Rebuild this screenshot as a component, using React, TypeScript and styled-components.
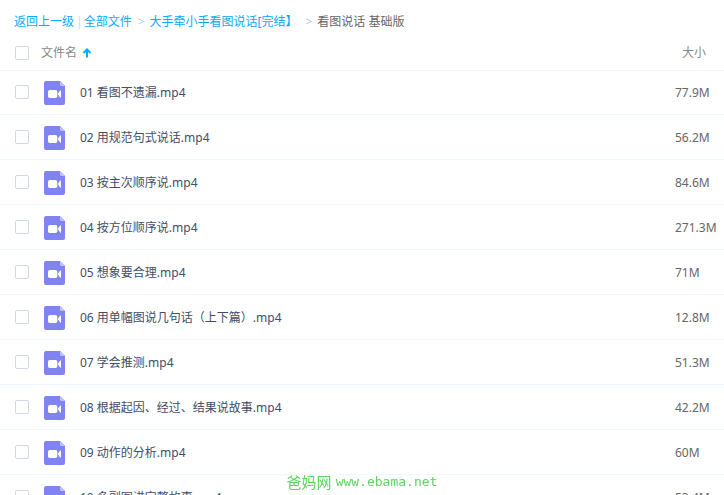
import React from "react";
import styled, { createGlobalStyle } from "styled-components";

const Global = createGlobalStyle`
  * { box-sizing: border-box; }
  html, body, #root { height: 100%; margin: 0; }
  body {
    overflow: hidden;
    background: #fff;
    color: #424e67;
    font: 12px/18px "Noto Sans", "Noto Sans CJK SC", sans-serif;
  }
`;

const Page = styled.main`
  height: 100%;
  overflow: hidden;
`;

const Breadcrumb = styled.nav`
  display: flex;
  align-items: center;
  height: 36px;
  padding: 8px 14px 0;
  color: #666;
  white-space: pre;
`;

const Crumb = styled.a`
  color: #09aaff;
  text-decoration: none;
`;

const Bar = styled.span`
  margin: 0 1px 0 2px;
  color: #c4dbfe;
`;

const Arrow = styled.span<{ $wide?: boolean }>`
  margin: 0 5px 0 ${(p) => (p.$wide ? 8 : 6)}px;
  color: #b5cfe9;
`;

const Table = styled.table`
  width: 100%;
  table-layout: fixed;
  border-collapse: separate;
  border-spacing: 0;
`;

const HeadRow = styled.tr`
  height: 35px;
  color: #888;
`;

const cell = `
  padding: 0;
  border-bottom: 1px solid #f0f6fd;
  text-align: left;
  vertical-align: middle;
  font-weight: normal;
  white-space: nowrap;
`;

const CheckCell = styled.td`
  ${cell}
  width: 41px;
  padding-left: 15px;
`;

const NameHead = styled.th`
  ${cell}
`;

const NameCell = styled.td`
  ${cell}
  padding-top: 2px;
`;

const SizeHead = styled.th`
  ${cell}
  width: 49px;
  padding-left: 7px;
`;

const SizeCell = styled.td`
  ${cell}
  padding-top: 2px;
  color: #666;
`;

const Row = styled.tr`
  height: 45px;
  &:first-child { height: 44px; }
  &:first-child ${CheckCell} { padding-bottom: 1px; }
  &:first-child ${NameCell}, &:first-child ${SizeCell} { padding-top: 0; }
`;

const Check = styled.input`
  display: block;
  appearance: none;
  width: 14px;
  height: 14px;
  margin: 0;
  border: 1px solid #d1d8e6;
  border-radius: 2px;
  background: #fff;
  &:checked { background: #09aaff; }
`;

const SortButton = styled.button`
  display: flex;
  align-items: center;
  gap: 5px;
  padding: 0;
  border: 0;
  background: none;
  color: inherit;
  font: inherit;
`;

const FileLabel = styled.label`
  display: flex;
  align-items: center;
  gap: 15px;
  padding-left: 3px;
`;

const Watermark = styled.div`
  position: fixed;
  bottom: 3px;
  left: 50%;
  display: flex;
  align-items: center;
  gap: 4px;
  transform: translateX(-50%);
  color: #5fd35f;
  font: 15px/20px "Noto Sans CJK SC", sans-serif;
  white-space: nowrap;
`;

const Site = styled.span`
  font: 13px/20px "DejaVu Sans Mono", monospace;
`;

const files = [
  ["01 看图不遗漏.mp4", "77.9M"],
  ["02 用规范句式说话.mp4", "56.2M"],
  ["03 按主次顺序说.mp4", "84.6M"],
  ["04 按方位顺序说.mp4", "271.3M"],
  ["05 想象要合理.mp4", "71M"],
  ["06 用单幅图说几句话（上下篇）.mp4", "12.8M"],
  ["07 学会推测.mp4", "51.3M"],
  ["08 根据起因、经过、结果说故事.mp4", "42.2M"],
  ["09 动作的分析.mp4", "60M"],
  ["10 多副图讲完整故事.mp4", "53.4M"],
];

const VideoIcon = () => (
  <svg width="21" height="24" viewBox="0 0 21 24" aria-hidden="true">
    <path d="M2 0H16L21 5V22a2 2 0 0 1-2 2H2a2 2 0 0 1-2-2V2a2 2 0 0 1 2-2z" fill="#8183f1" />
    <path d="M16 0L21 5H17.5A1.5 1.5 0 0 1 16 3.5z" fill="#c0c1f8" />
    <rect x="4" y="9" width="9.3" height="8" rx="1.8" fill="#fff" />
    <path d="M13.7 13L16.2 9.6Q17 9 17 10V16Q17 17 16.2 16.4z" fill="#fff" />
  </svg>
);

const UpIcon = () => (
  <svg width="10" height="10" viewBox="0 0 10 10" aria-hidden="true">
    <path d="M5 9.5V2M1.5 5L5 1.5L8.5 5" fill="none" stroke="#09aaff" strokeWidth="2" />
  </svg>
);

export default function App() {
  return (
    <Page>
      <Global />
      <Breadcrumb aria-label="路径">
        <Crumb href="#up">返回上一级</Crumb>
        <Bar>|</Bar>
        <Crumb href="#all">全部文件</Crumb>
        <Arrow>&gt;</Arrow>
        <Crumb href="#folder">大手牵小手看图说话[完结】</Crumb>
        <Arrow $wide>&gt;</Arrow>
        <span>看图说话 基础版</span>
      </Breadcrumb>
      <Table>
        <thead>
          <HeadRow>
            <CheckCell><Check type="checkbox" aria-label="全选" /></CheckCell>
            <NameHead><SortButton>文件名<UpIcon /></SortButton></NameHead>
            <SizeHead>大小</SizeHead>
          </HeadRow>
        </thead>
        <tbody>
          {files.map(([name, size], i) => (
            <Row key={name}>
              <CheckCell><Check type="checkbox" id={`file-${i}`} /></CheckCell>
              <NameCell><FileLabel htmlFor={`file-${i}`}><VideoIcon />{name}</FileLabel></NameCell>
              <SizeCell>{size}</SizeCell>
            </Row>
          ))}
        </tbody>
      </Table>
      <Watermark>爸妈网<Site>www.ebama.net</Site></Watermark>
    </Page>
  );
}
